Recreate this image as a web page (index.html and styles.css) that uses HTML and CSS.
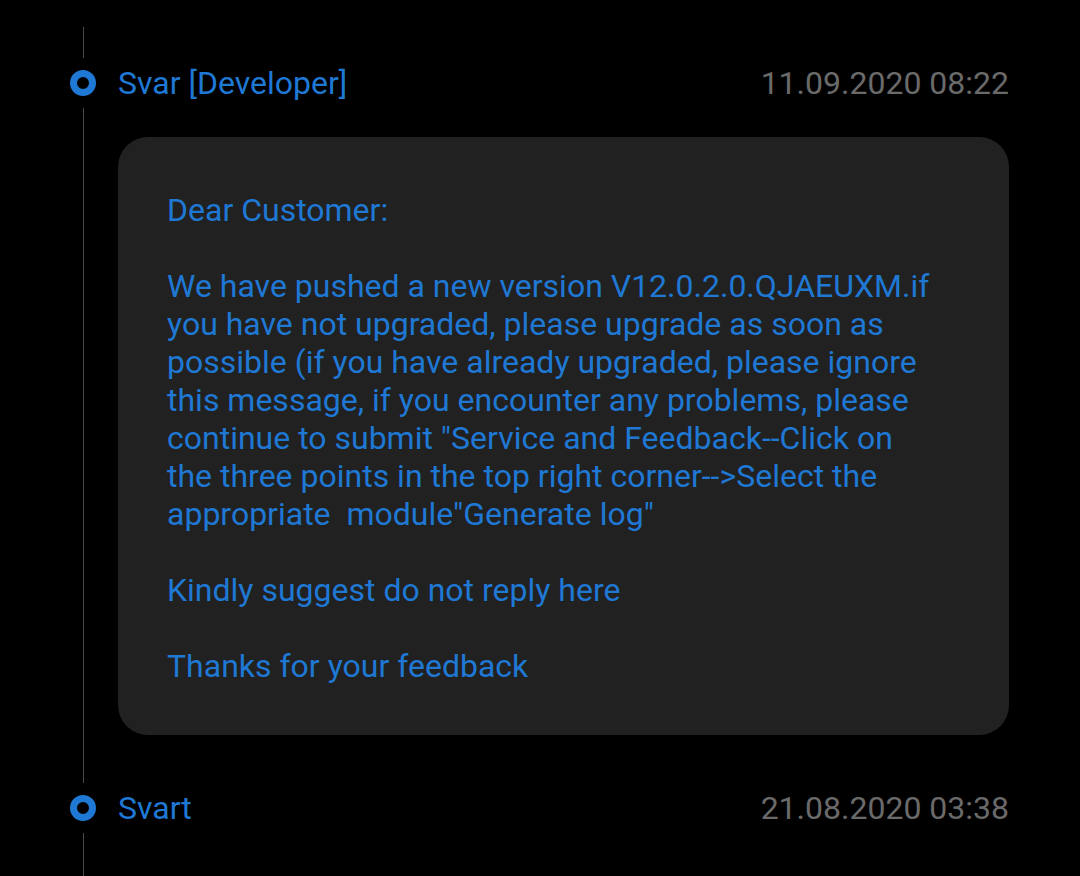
FILE: index.html
```html
<!DOCTYPE html>
<html lang="en">
<head>
    <meta charset="UTF-8">
    <meta name="viewport" content="width=device-width, initial-scale=1.0">
    <title>Feedback - Replies</title>
    <link rel="stylesheet" href="styles.css">
</head>
<body>
    <div class="timeline">

        <!-- Developer reply -->
        <div class="entry">
            <div class="rail">
                <span class="seg lead"></span>
                <span class="marker"></span>
                <span class="seg tail"></span>
            </div>
            <div class="entry-body">
                <div class="entry-head first">
                    <span class="author">Svar [Developer]</span>
                    <span class="stamp">11.09.2020 08:22</span>
                </div>
                <div class="card">
                    <p>Dear Customer:</p>
                    <p>We have pushed a new version V12.0.2.0.QJAEUXM.if<br>you have not upgraded, please upgrade as soon as<br>possible (if you have already upgraded, please ignore<br>this message, if you encounter any problems, please<br>continue to submit "Service and Feedback--Click on<br>the three points in the top right corner--&gt;Select the<br>appropriate&nbsp; module"Generate log"</p>
                    <p>Kindly suggest do not reply here</p>
                    <p>Thanks for your feedback</p>
                </div>
            </div>
        </div>

        <!-- Earlier reply -->
        <div class="entry last">
            <div class="rail">
                <span class="marker"></span>
                <span class="seg tail"></span>
            </div>
            <div class="entry-body">
                <div class="entry-head">
                    <span class="author">Svart</span>
                    <span class="stamp">21.08.2020 03:38</span>
                </div>
            </div>
        </div>

    </div>
</body>
</html>
```

FILE: styles.css
```css
/* General Styling */
body {
    margin: 0;
    height: 100vh;
    overflow: hidden;
    background-color: #000;
    font-family: Roboto, 'Liberation Sans', sans-serif;
}

.timeline {
    padding: 27px 71px 0 70px;
}

/* One reply = rail on the left, content on the right */
.entry {
    display: flex;
    gap: 22px;
}

.rail {
    width: 26px;
    flex-shrink: 0;
    display: flex;
    flex-direction: column;
    align-items: center;
}

.seg {
    width: 1px;
    background-color: #4a4a4a;
}

.seg.lead {
    height: 31px;
}

.seg.tail {
    flex: 1;
}

.entry.last .seg.tail {
    min-height: 60px;
}

.marker {
    width: 26px;
    height: 26px;
    box-sizing: border-box;
    border: 7px solid #1f78d4;
    border-radius: 50%;
    margin: 12px 0;
}

.entry-body {
    flex: 1;
    min-width: 0;
}

.entry-head {
    height: 26px;
    margin-top: 12px;
    display: flex;
    justify-content: space-between;
    align-items: center;
}

.entry-head.first {
    margin-top: 43px;
}

.author {
    color: #1f78d4;
    font-size: 32px;
}

.stamp {
    color: #6a6a6a;
    font-size: 32px;
}

/* Message card */
.card {
    margin: 41px 0 48px;
    padding: 54px 30px 50px 49px;
    background-color: #212121;
    border-radius: 30px;
    color: #1f78d4;
    font-size: 32px;
    line-height: 38px;
}

.card p {
    margin: 0 0 38px;
    white-space: nowrap;
}

.card p:last-child {
    margin-bottom: 0;
}
```
